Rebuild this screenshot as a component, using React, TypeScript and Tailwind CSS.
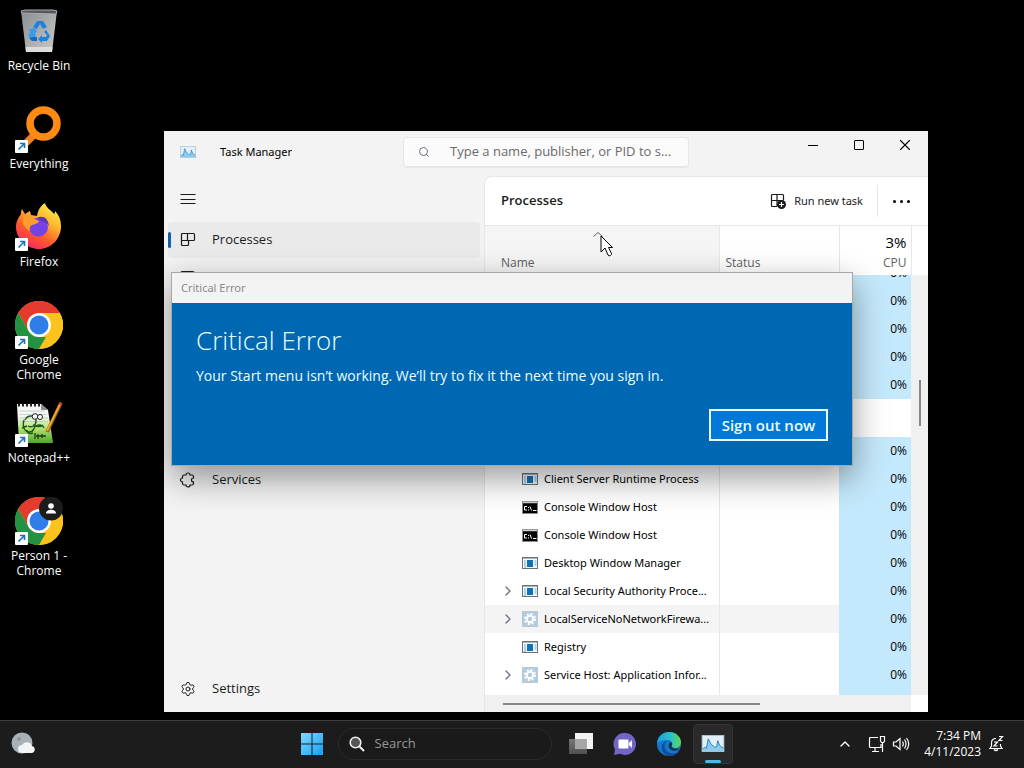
import { FC, ReactNode } from 'react';
import { ChevronRight, ChevronUp, Search, Settings, X } from 'lucide-react';

const ShortcutArrow: FC = () => (
  <g>
    <rect x="0" y="35" width="13" height="13" rx="1" fill="#fff" />
    <path d="M3.5 44.5 9 39M5 38.500h4.500v4.500" stroke="#1a73b8" strokeWidth="1.600" fill="none" />
  </g>
);

const RecycleIcon: FC = () => (
  <svg viewBox="0 0 48 48" className="h-12 w-12">
    <defs>
      <linearGradient id="bin" x1="0" y1="0" x2="1" y2="1">
        <stop offset="0" stopColor="#8b8e90" />
        <stop offset="1" stopColor="#c9cbcc" />
      </linearGradient>
    </defs>
    <path d="M6 4 42 4 37 45 11 45Z" fill="url(#bin)" />
    <path d="M6 4 10 3H38L42 4 41 7 7 6Z" fill="#55585a" stroke="#a9acae" strokeWidth="1" />
    <path d="M10.500 40 37.500 40 37 45 11 45Z" fill="#dcdddd" />
    <path d="M18 20l4-6h6l4 6-4 2-3-5-3 5z" fill="#1f83dc" />
    <path d="M14 22l6-1 2 4-2 1 1 3-4 4-4-4 2-4z" fill="#3b9be8" />
    <path d="M31 23l4 6-3 5h-5v2l-4-4 4-4v2h4l1-2-3-3z" fill="#1f83dc" />
    <path d="M14 31l3 3h5v-4h-4z" fill="#1769bd" />
  </svg>
);

const EverythingIcon: FC = () => (
  <svg viewBox="0 0 48 48" className="h-12 w-12">
    <path d="M21 28 11 38" stroke="#f58220" strokeWidth="7" />
    <circle cx="28.500" cy="18.500" r="13.500" fill="none" stroke="#ff8a14" strokeWidth="7.500" />
    <ShortcutArrow />
  </svg>
);

const FirefoxIcon: FC = () => (
  <svg viewBox="0 0 48 48" className="h-12 w-12">
    <defs>
      <linearGradient id="fox" x1="0.800" y1="0" x2="0.200" y2="1">
        <stop offset="0" stopColor="#fff24a" />
        <stop offset="0.350" stopColor="#ffb52e" />
        <stop offset="0.650" stopColor="#ff5a2c" />
        <stop offset="1" stopColor="#f0216b" />
      </linearGradient>
    </defs>
    <path
      d="M30 0c1 5 6 7 9 11 1-1 1-2 1-3 4 4 6 9 6 15 0 13-10 23-22 23S1 36 1 24c0-6 3-10 5-13 0-2 0-3 1-5l3 5 5-3 1 4 6 1c1-6 4-11 8-13z"
      fill="url(#fox)"
    />
    <circle cx="23.500" cy="24" r="9.500" fill="#7542e5" />
    <path d="M22 15c6-3 11 0 12 8-2-3-4-4-6-4z" fill="#5b37b7" />
    <path d="M9 13c4-2 7-1 9 2l6 3c-1 3-4 3-7 4-2 1-3 3-2 6-6-3-9-9-6-15z" fill="#ff9c2b" />
    <ShortcutArrow />
  </svg>
);

const ChromeIcon: FC<{ profile?: boolean }> = ({ profile }) => (
  <svg viewBox="0 0 48 48" className="h-12 w-12">
    <circle cx="24" cy="24" r="24" fill="#fcc31e" />
    <path d="M3.200 12A24 24 0 0 1 44.800 12H24L13.600 30Z" fill="#e33b2e" />
    <path d="M3.200 12 13.600 30 24 36h10.400L24 48A24 24 0 0 1 3.200 12Z" fill="#229342" />
    <path d="M34.400 30 24 48A24 24 0 0 0 44.800 12H24Z" fill="#fcc31e" />
    <circle cx="24" cy="24" r="12" fill="#fff" />
    <circle cx="24" cy="24" r="9.500" fill="#2f7de9" />
    {profile && (
      <g>
        <circle cx="36" cy="11.500" r="12" fill="#1c1c1e" />
        <circle cx="36" cy="9" r="2.800" fill="#fff" />
        <path d="M31 16.500c0-5 10-5 10 0z" fill="#fff" />
      </g>
    )}
    <ShortcutArrow />
  </svg>
);

const NotepadIcon: FC = () => (
  <svg viewBox="0 0 48 48" className="h-12 w-12">
    <defs>
      <linearGradient id="note" x1="0" y1="0" x2="0" y2="1">
        <stop offset="0.300" stopColor="#f6f8f4" />
        <stop offset="0.600" stopColor="#b9e67a" />
        <stop offset="1" stopColor="#4fa62c" />
      </linearGradient>
    </defs>
    <path d="M2 5H26L33 11 38 44H4Z" fill="url(#note)" />
    <path d="M26 5v6h7z" fill="#8c9094" />
    <path d="M3 6H26" stroke="#222" strokeWidth="3" strokeDasharray="2 2" />
    <path d="M4 12h26M4 15.500h28M5 19h28M5 22.500h28" stroke="#b9c0c8" strokeWidth="0.700" />
    <path
      d="M10 21c3-6 11-5 11 1 0 5-5 7-8 5M9 21c-2 6 0 12 6 12 4 0 3-4 6-6s7-1 8 2M12 31c0 4 4 4 6 3M7 29l5-2M18 26c4 2 8 2 10 0"
      fill="none"
      stroke="#1f5a1b"
      strokeWidth="1.400"
    />
    <circle cx="20" cy="17.500" r="2.800" fill="#fff" stroke="#222" />
    <circle cx="25" cy="18" r="2.500" fill="#fff" stroke="#222" />
    <path d="M20 34v6M23 35v5M21 37h10M27 35v4" stroke="#1f3d16" strokeWidth="1.300" />
    <path d="M46 4 32 33" stroke="#8a5a18" strokeWidth="3.500" />
    <path d="M45.500 4 32 32" stroke="#f0a52c" strokeWidth="2" />
    <path d="M45 3l2.500 1-1 2.500-2.500-1z" fill="#c33a2f" />
    <ShortcutArrow />
  </svg>
);

const TaskManagerIcon: FC<{ className: string }> = ({ className }) => (
  <svg viewBox="0 0 24 18" className={className}>
    <rect x="0.500" y="0.500" width="23" height="17" fill="#e2f1f9" stroke="#a9c4d3" />
    <path d="M1 16l2-3 2 1L7 4l3 6 4 3 2-1 1-6 2 5 4 3v3H1z" fill="#8ccbee" />
    <path d="M1 15l2-2 2 1L7 4l3 6 4 3 2-1 1-6 2 5 4 3" fill="none" stroke="#2a7fb5" />
  </svg>
);

const MenuIcon: FC = () => (
  <svg viewBox="0 0 16 16" className="h-4 w-4" stroke="currentColor">
    <path d="M0.500 3.500h15M0.500 8.500h15M0.500 12.500h15" />
  </svg>
);

const ProcessesIcon: FC = () => (
  <svg viewBox="0 0 16 16" className="h-4 w-4" fill="none" stroke="currentColor" strokeWidth="1.200">
    <path d="M2.500 1.500H13.500q1 0 1 1v5q0 1-1 1H8.500v4q0 1-1 1h-5q-1 0-1-1v-10q0-1 1-1zM7.500 1.500v7M1.500 8.500h7V13" />
  </svg>
);

const PerformanceIcon: FC = () => (
  <svg viewBox="0 0 18 18" className="h-[18px] w-[18px]" fill="none" stroke="currentColor" strokeWidth="1.200">
    <path d="M3.500 0.600h10q2 0 2 2v12q0 2-2 2h-10q-2 0-2-2v-12q0-2 2-2zM2 10h3l2-5 3 8 2-3h3" />
  </svg>
);

const ServicesIcon: FC = () => (
  <svg viewBox="0 0 16 16" className="h-4 w-4" fill="none" stroke="currentColor" strokeWidth="1.200">
    <path d="M4 3h2a2 2 0 0 1 4 0h2q1.500 0 1.500 1.500V6a2 2 0 0 0 0 4v1.500q0 1.500-1.500 1.500h-2a2 2 0 0 1-4 0H4q-1.500 0-1.500-1.500V10a2 2 0 0 1 0-4V4.500Q2.500 3 4 3z" />
  </svg>
);

const RunTaskIcon: FC = () => (
  <svg viewBox="0 0 16 16" className="h-4 w-4" fill="none" stroke="currentColor" strokeWidth="1.200">
    <path d="M7 13.500H2.500q-1 0-1-1v-10q0-1 1-1h10q1 0 1 1V7M7 1.500v12M1.500 7.500h12" />
    <circle cx="11.500" cy="11.500" r="4.500" fill="currentColor" stroke="none" />
    <path d="M11.500 9v5M9 11.500h5" stroke="#fff" />
  </svg>
);

type ProcessKind = 'app' | 'console' | 'service';

const ProcessIcon: FC<{ kind: ProcessKind }> = ({ kind }) => {
  if (kind === 'console') {
    return (
      <svg viewBox="0 0 16 16" className="h-4 w-4 shrink-0">
        <rect x="0.500" y="2.500" width="15" height="12" fill="#000" stroke="#8c8c8c" />
        <path d="M1 3.500h14" stroke="#d0d0d0" strokeWidth="1.500" />
        <path d="M5 7.500H2.500v3.500H5M6.500 8v1M6.500 10.500v1M8 7.500l1.500 4M11 11.500h3.500" stroke="#fff" fill="none" />
      </svg>
    );
  }
  if (kind === 'service') {
    return (
      <svg viewBox="0 0 16 16" className="h-4 w-4 shrink-0">
        <rect width="16" height="16" fill="#b4cbdc" />
        <circle cx="8" cy="8" r="5" fill="none" stroke="#fff" strokeWidth="2" strokeDasharray="2 1.930" />
        <circle cx="8" cy="8" r="3.200" fill="none" stroke="#fff" strokeWidth="2" />
      </svg>
    );
  }
  return (
    <svg viewBox="0 0 16 16" className="h-4 w-4 shrink-0">
      <rect x="0.500" y="2.500" width="15" height="11" fill="#f4f8fb" stroke="#6b7378" />
      <path d="M1 3h14" stroke="#6b7378" />
      <path d="M2 6h2M2 8h2M2 10h2M2 12h2M12.500 6h2M12.500 8h2M12.500 10h2" stroke="#6fa7c9" />
      <rect x="5" y="5" width="6" height="7" fill="#1271b5" />
    </svg>
  );
};

const desktopIcons: { label: string; icon: ReactNode }[] = [
  { label: 'Recycle Bin', icon: <RecycleIcon /> },
  { label: 'Everything', icon: <EverythingIcon /> },
  { label: 'Firefox', icon: <FirefoxIcon /> },
  { label: 'Google Chrome', icon: <ChromeIcon /> },
  { label: 'Notepad++', icon: <NotepadIcon /> },
  { label: 'Person 1 - Chrome', icon: <ChromeIcon profile /> },
];

interface ProcessRow {
  name: string;
  kind: ProcessKind;
  expandable?: boolean;
  hovered?: boolean;
}

const processes: ProcessRow[] = [
  { name: 'Client Server Runtime Process', kind: 'app' },
  { name: 'Console Window Host', kind: 'console' },
  { name: 'Console Window Host', kind: 'console' },
  { name: 'Desktop Window Manager', kind: 'app' },
  { name: 'Local Security Authority Proce...', kind: 'app', expandable: true },
  { name: 'LocalServiceNoNetworkFirewa...', kind: 'service', expandable: true, hovered: true },
  { name: 'Registry', kind: 'app' },
  { name: 'Service Host: Application Infor...', kind: 'service', expandable: true },
];

const CpuCell: FC = () => <td className="bg-[#c5e9fc] pr-1 text-right">0%</td>;

const EmptyRow: FC = () => (
  <tr className="h-7">
    <td className="border-r border-gray-200" />
    <td />
    <CpuCell />
  </tr>
);

const ProcessTable: FC = () => (
  <table className="w-full table-fixed border-collapse text-xs text-black">
    <colgroup>
      <col />
      <col className="w-[120px]" />
      <col className="w-[72px]" />
      <col className="w-[17px]" />
    </colgroup>
    <thead>
      <tr className="h-[49px] text-[#5f5f5f]">
        <th className="border-r border-gray-200 bg-[#f5f5f5] pr-6 pb-1 pl-4 text-left align-bottom font-normal">
          <svg viewBox="0 0 10 5" className="mx-auto mb-[18px] h-[5px] w-[10px]" fill="none" stroke="currentColor">
            <path d="M0.500 4.500 5 0.500l4.500 4" />
          </svg>
          Name
        </th>
        <th className="border-r border-gray-200 px-[6px] pb-1 text-left align-bottom font-normal">Status</th>
        <th className="border-r border-gray-200 pr-1 pb-1 text-right align-bottom font-normal">
          <span className="block text-[15px] leading-[26px] text-black">3%</span>
          CPU
        </th>
        <th />
      </tr>
    </thead>
    <tbody>
      <tr className="h-3">
        <td className="border-r border-gray-200" />
        <td />
        <td className="bg-[#c5e9fc] pr-1">
          <div className="flex h-3 items-end justify-end overflow-hidden leading-7">0%</div>
        </td>
        <td rowSpan={16} className="bg-[#f0f0f0] align-top">
          <div className="mx-auto mt-[105px] h-[46px] w-[2px] bg-[#868686]" />
        </td>
      </tr>
      <EmptyRow />
      <EmptyRow />
      <EmptyRow />
      <EmptyRow />
      <tr className="h-[38px]">
        <td colSpan={3} />
      </tr>
      <EmptyRow />
      {processes.map((obj, index) => (
        <tr key={index} className={obj.hovered ? 'h-7 bg-[#f4f4f4]' : 'h-7'}>
          <td className="border-r border-gray-200">
            <div className="flex items-center pl-[15px]">
              <span className="w-[22px] shrink-0">
                {obj.expandable && <ChevronRight className="h-4 w-4 text-gray-500" />}
              </span>
              <ProcessIcon kind={obj.kind} />
              <span className="ml-[6px] font-['Noto_Sans',sans-serif] text-[11px] whitespace-nowrap">{obj.name}</span>
            </div>
          </td>
          <td />
          <CpuCell />
        </tr>
      ))}
      <tr className="h-[6px]">
        <td className="border-r border-gray-200" />
        <td />
        <td className="bg-[#c5e9fc]" />
      </tr>
    </tbody>
  </table>
);

const NavButton: FC<{ label: string; icon: ReactNode; active?: boolean }> = ({ label, icon, active }) => (
  <li className="flex h-10 items-center px-1">
    <button
      className={
        active
          ? 'flex h-9 w-full items-center rounded bg-[#eaeaea] text-[13px]'
          : 'flex h-9 w-full items-center rounded text-[13px]'
      }
    >
      <span className={active ? 'h-4 w-[3px] rounded bg-[#0f5fae]' : 'h-4 w-[3px]'} />
      <span className="ml-[9px]">{icon}</span>
      <span className="ml-4">{label}</span>
    </button>
  </li>
);

const TaskManager: FC = () => (
  <section className="absolute top-[131px] left-[164px] flex h-[581px] w-[764px] flex-col bg-[#f3f3f3] text-[#1b1b1b]">
    <header className="flex h-[45px] shrink-0 items-start">
      <div className="flex h-[42px] w-[239px] items-center pl-4">
        <TaskManagerIcon className="h-3 w-4" />
        <h1 className="ml-6 font-['Noto_Sans',sans-serif] text-[11px] text-black">Task Manager</h1>
      </div>
      <label className="mt-[6px] flex h-[31px] w-[286px] items-center rounded border border-b-2 border-gray-200 bg-[#fbfbfb] pr-1 pl-[14px]">
        <Search className="h-3 w-3 shrink-0 text-gray-500" />
        <input
          aria-label="Search processes"
          placeholder="Type a name, publisher, or PID to s..."
          className="ml-5 w-full min-w-0 bg-transparent text-[13px] outline-none placeholder:text-[#6a6a6a]"
        />
      </label>
      <div className="ml-auto flex text-black">
        <button aria-label="Minimize" className="flex h-7 w-[46px] items-center justify-center">
          <span className="h-px w-[10px] bg-black" />
        </button>
        <button aria-label="Maximize" className="flex h-7 w-[46px] items-center justify-center">
          <span className="h-[10px] w-[10px] rounded-[1px] border border-black" />
        </button>
        <button aria-label="Close" className="flex h-7 w-[46px] items-center justify-center">
          <X className="h-[18px] w-[18px]" strokeWidth={1.5} />
        </button>
      </div>
    </header>
    <div className="flex min-h-0 flex-1">
      <nav className="flex w-[320px] flex-col">
        <button aria-label="Open navigation" className="flex h-11 items-center pt-px pl-4">
          <MenuIcon />
        </button>
        <ul>
          <NavButton label="Processes" icon={<ProcessesIcon />} active />
          <li className="flex h-10 items-center pl-[15px]">
            <button aria-label="Performance">
              <PerformanceIcon />
            </button>
          </li>
        </ul>
        <ul className="mt-40">
          <NavButton label="Services" icon={<ServicesIcon />} />
        </ul>
        <ul className="mt-auto mb-[3px]">
          <NavButton label="Settings" icon={<Settings className="h-4 w-4" strokeWidth={1.5} />} />
        </ul>
      </nav>
      <main className="flex min-w-0 flex-1 flex-col rounded-tl-lg border-t border-l border-gray-200 bg-white">
        <div className="flex h-[49px] shrink-0 items-center border-b border-gray-200 pl-4">
          <h2 className="text-[13px] font-semibold">Processes</h2>
          <button className="ml-auto flex items-center gap-2 pr-[14px] font-['Noto_Sans',sans-serif] text-[11px]">
            <RunTaskIcon />
            Run new task
          </button>
          <button
            aria-label="More"
            className="flex h-8 w-[51px] items-center justify-center gap-1 border-l border-gray-200 pr-[3px]"
          >
            <span className="h-[3px] w-[3px] rounded-full bg-black" />
            <span className="h-[3px] w-[3px] rounded-full bg-black" />
            <span className="h-[3px] w-[3px] rounded-full bg-black" />
          </button>
        </div>
        <ProcessTable />
        <div className="mr-[17px] flex flex-1 items-center bg-[#f0f0f0] pl-[18px]">
          <div className="h-[2px] w-[257px] bg-[#868686]" />
        </div>
      </main>
    </div>
  </section>
);

const CriticalError: FC = () => (
  <section
    role="alertdialog"
    aria-labelledby="error-title"
    className="absolute top-[272px] left-[171px] flex h-[194px] w-[682px] flex-col border border-[#a5a8ab] bg-[#0067b3] text-[#eaffff] shadow-[0_12px_32px_rgba(0,0,0,0.4)]"
  >
    <header className="h-[30px] bg-[#f3f3f3] px-[9px] font-['Noto_Sans',sans-serif] text-[11px] leading-[30px] text-[#8a8a8a]">
      Critical Error
    </header>
    <div className="flex flex-1 flex-col px-6 pt-[19px] pb-6">
      <h2 id="error-title" className="text-[26px] leading-9 font-light">
        Critical Error
      </h2>
      <p className="mt-[6px] text-sm leading-6">Your Start menu isn’t working. We’ll try to fix it the next time you sign in.</p>
      <button className="mt-auto h-8 w-[119px] self-end border-2 border-[#eaffff] bg-[#0078d7] text-[15px] font-semibold">
        Sign out now
      </button>
    </div>
  </section>
);

const Cursor: FC = () => (
  <svg viewBox="0 0 13 22" className="absolute top-[235px] left-[600px] h-[22px] w-[13px]">
    <path d="M1 1v16l4-4 3 7q1 1.500 2.500.5t1-2L8.500 12.500H12.500Z" fill="#fff" stroke="#000" />
  </svg>
);

const Taskbar: FC = () => (
  <footer className="grid h-12 shrink-0 grid-cols-[1fr_auto_1fr] items-center border-t border-[#3d3d3d] bg-[#1c1c1c] pb-px text-white">
    <button aria-label="Weather" className="ml-[11px] w-6">
      <svg viewBox="0 0 24 24" className="h-6 w-6">
        <circle cx="11" cy="11" r="10.500" fill="#a9b0b6" />
        <circle cx="8" cy="7" r="2" fill="#8e969d" />
        <path d="M11 21a4 4 0 0 1 0-8 5.500 5.500 0 0 1 10 1 3.600 3.600 0 0 1 0 7z" fill="#f2f4f6" />
      </svg>
    </button>
    <div className="flex items-center">
      <button aria-label="Start" className="flex h-10 w-11 items-center justify-center">
        <svg viewBox="0 0 24 24" className="h-6 w-6">
          <defs>
            <linearGradient id="win" x1="0" y1="0" x2="1" y2="1">
              <stop offset="0" stopColor="#7cdcff" />
              <stop offset="1" stopColor="#1a9cf4" />
            </linearGradient>
          </defs>
          <path d="M1 1h10.500v10.500H1zM12.500 1H23v10.500H12.500zM1 12.500h10.500V23H1zM12.500 12.500H23V23H12.500z" fill="url(#win)" />
        </svg>
      </button>
      <label className="mr-[7px] ml-1 flex h-8 w-[214px] items-center rounded-full border border-[#2b2b2b] bg-[#1a1a1a] px-[10px]">
        <svg viewBox="0 0 16 16" className="h-4 w-4 shrink-0">
          <circle cx="6.500" cy="6.500" r="5.300" fill="#555" stroke="#f2f2f2" strokeWidth="1.600" />
          <path d="M10.500 10.500 15 15" stroke="#f2f2f2" strokeWidth="2" />
        </svg>
        <input
          aria-label="Search"
          placeholder="Search"
          className="ml-[10px] w-full bg-transparent text-[13px] outline-none placeholder:text-[#979797]"
        />
      </label>
      <button aria-label="Task view" className="flex h-10 w-11 items-center justify-center">
        <svg viewBox="0 0 24 24" className="h-6 w-6">
          <defs>
            <linearGradient id="view" x1="0" y1="0" x2="0" y2="1">
              <stop offset="0" stopColor="#777" />
              <stop offset="1" stopColor="#505050" />
            </linearGradient>
          </defs>
          <rect x="6" y="1" width="18" height="16" fill="#f4f4f4" />
          <rect x="0" y="7" width="18" height="15" fill="url(#view)" />
          <rect x="6" y="7" width="12" height="10" fill="#a6a6a6" />
        </svg>
      </button>
      <button aria-label="Chat" className="flex h-10 w-11 items-center justify-center">
        <svg viewBox="0 0 24 24" className="h-6 w-6">
          <path d="M12 1a11 11 0 1 1-5 20.800L1 23l1-5.500A11 11 0 0 1 12 1z" fill="#6f66c6" />
          <rect x="5.500" y="7.500" width="10" height="9" rx="1" fill="#fff" />
          <path d="M16 11l3-3v8l-3-3z" fill="#fff" />
        </svg>
      </button>
      <button aria-label="Edge" className="flex h-10 w-11 items-center justify-center">
        <svg viewBox="0 0 24 24" className="h-6 w-6">
          <defs>
            <linearGradient id="edge" x1="0" y1="0" x2="1" y2="0">
              <stop offset="0" stopColor="#1c9fe0" />
              <stop offset="0.600" stopColor="#2cc3c4" />
              <stop offset="1" stopColor="#62d84e" />
            </linearGradient>
          </defs>
          <circle cx="12" cy="12" r="12" fill="#1578cf" />
          <path d="M0 11C1 4 6 0 12 0c7 0 12 5 12 10 0 4-3 6-6 6-2 0-4-1-3-3 1-3-1-5-5-5-5 0-9 2-10 3z" fill="url(#edge)" />
          <path d="M10 9c-4 3-3 10 3 12 4 1 7 0 9-2-3 4-7 5-10 5C7 23 3 18 5 13c1-2 3-4 5-4z" fill="#0f4f9e" />
          <path d="M13.500 10c2 1 2 2 1 4 1 3 5 3 8 2l-1.500 2c-4 2-9 0-9.500-4 0-2 1-3 2-4z" fill="#17354f" />
        </svg>
      </button>
      <button
        aria-label="Task Manager"
        className="mx-[2px] flex h-10 w-10 flex-col items-center rounded border border-[#353535] bg-[#292929] pt-[10px]"
      >
        <TaskManagerIcon className="h-[18px] w-6" />
        <span className="mt-2 h-[3px] w-4 shrink-0 rounded bg-[#4cb4f0]" />
      </button>
    </div>
    <div className="flex items-center justify-end pr-[19px]">
      <button aria-label="Show hidden icons" className="mr-[15px]">
        <ChevronUp className="h-4 w-4" />
      </button>
      <svg viewBox="0 0 18 18" className="h-[18px] w-[18px]" fill="none" stroke="#fff" strokeWidth="1.200">
        <path d="M10 2.500H2.500q-1 0-1 1v8q0 1 1 1H13V9M7 12.500V16M4 16.500h7M12.500 1.500h4V6l-1 1.500h-2L12.500 6zM14.500 8v9" />
      </svg>
      <svg viewBox="0 0 18 18" className="ml-[6px] h-[18px] w-[18px]" fill="none" stroke="#fff" strokeWidth="1.200">
        <path d="M1.500 7v4H4l4 3.500v-11L4 7zM10.500 6.500q1.500 2.500 0 5M12.500 4.500q3 4.500 0 9M14.500 3q4.500 6 0 12" />
      </svg>
      <time className="ml-[14px] text-right text-xs leading-4">
        <span className="block">7:34 PM</span>
        4/11/2023
      </time>
      <svg viewBox="0 0 18 18" className="ml-[6px] h-[18px] w-[18px]" fill="none" stroke="#fff" strokeWidth="1.200">
        <path d="M9 3.500Q4.500 3.500 4.500 8v3L3 13.500h12L13.500 11V9M7 14.500q2 2 4 0M7 7h3.500L7 11h3.500M12 1.500h3.500L12 5.500h3.500" />
      </svg>
    </div>
  </footer>
);

export default function App() {
  return (
    <div className="relative flex h-screen flex-col overflow-hidden bg-black font-['Open_Sans',sans-serif]">
      <ul className="w-[78px] flex-1 pt-[7px]">
        {desktopIcons.map((obj) => (
          <li key={obj.label} className="h-[98px]">
            <button className="flex w-full flex-col items-center gap-[3px] px-1 text-xs leading-[15px] text-white">
              {obj.icon}
              {obj.label}
            </button>
          </li>
        ))}
      </ul>
      <TaskManager />
      <CriticalError />
      <Cursor />
      <Taskbar />
    </div>
  );
}
